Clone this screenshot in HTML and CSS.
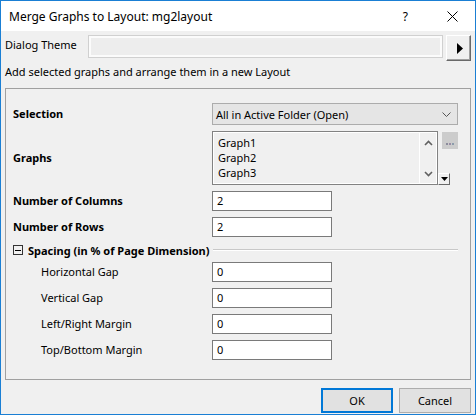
FILE: index.html
```html
<!DOCTYPE html>
<html>
<head>
<meta charset="utf-8">
<link rel="stylesheet" href="styles.css">
</head>
<body>
<div class="window">
  <div class="titlebar">
    <span class="title">Merge Graphs to Layout: mg2layout</span>
    <span class="help">?</span>
    <svg class="close" width="11" height="11" viewBox="0 0 11 11"><path d="M0.5 0.5 L10.5 10.5 M10.5 0.5 L0.5 10.5" stroke="#000" stroke-width="1" fill="none"/></svg>
  </div>
  <div class="content">
    <div class="theme-row">
      <span class="theme-label">Dialog Theme</span>
      <div class="theme-field"></div>
      <div class="arrow-btn"><svg width="6" height="11" viewBox="0 0 6 11"><path d="M0 0 L6 5.5 L0 11 Z" fill="#000"/></svg></div>
    </div>
    <div class="desc">Add selected graphs and arrange them in a new Layout</div>
    <div class="group">
      <div class="grid">
        <span class="lbl bold">Selection</span>
        <div class="combo">
          <span>All in Active Folder (Open)</span>
          <svg class="chev" width="9" height="5" viewBox="0 0 9 5"><path d="M0.5 0.5 L4.5 4.5 L8.5 0.5" stroke="#555" stroke-width="1" fill="none"/></svg>
        </div>

        <span class="lbl bold">Graphs</span>
        <div class="list-cell">
          <div class="listbox">
            <div class="items">
              <div>Graph1</div>
              <div>Graph2</div>
              <div>Graph3</div>
            </div>
            <div class="scroll">
              <svg width="9" height="6" viewBox="0 0 9 6"><path d="M1 5 L4.5 1.5 L8 5" stroke="#606060" stroke-width="1.6" fill="none"/></svg>
              <svg width="9" height="6" viewBox="0 0 9 6"><path d="M1 1 L4.5 4.5 L8 1" stroke="#606060" stroke-width="1.6" fill="none"/></svg>
            </div>
          </div>
          <div class="side">
            <div class="dots"><i class="d1"></i><i class="d2"></i><i class="d3"></i></div>
            <div class="dd"><svg width="7" height="4" viewBox="0 0 7 4"><path d="M0 0 L7 0 L3.5 4 Z" fill="#000"/></svg></div>
          </div>
        </div>

        <span class="lbl bold">Number of Columns</span>
        <div class="field">2</div>

        <span class="lbl bold">Number of Rows</span>
        <div class="field">2</div>

        <div class="section">
          <span class="toggle"><i></i></span>
          <span class="bold sec-title">Spacing (in % of Page Dimension)</span>
          <span class="rule"></span>
        </div>

        <span class="lbl sub">Horizontal Gap</span>
        <div class="field">0</div>

        <span class="lbl sub">Vertical Gap</span>
        <div class="field">0</div>

        <span class="lbl sub">Left/Right Margin</span>
        <div class="field">0</div>

        <span class="lbl sub">Top/Bottom Margin</span>
        <div class="field">0</div>
      </div>
    </div>
    <div class="buttons">
      <div class="btn ok">OK</div>
      <div class="btn">Cancel</div>
    </div>
  </div>
</div>
</body>
</html>
```

FILE: styles.css
```css
html, body {
  margin: 0;
  padding: 0;
  background: #f0f0f0;
}
body {
  font-family: "Noto Sans", "Open Sans", sans-serif;
  font-size: 11px;
  color: #000;
}
.window {
  width: 476px;
  height: 415px;
  box-sizing: border-box;
  border: 1px solid #1a7fd4;
  background: #f0f0f0;
  display: flex;
  flex-direction: column;
}
.titlebar {
  height: 30px;
  flex: none;
  background: #fff;
  display: flex;
  align-items: center;
  padding-left: 8px;
}
.title {
  font-size: 12px;
  line-height: 16px;
  margin-top: 1px;
}
.help {
  margin-left: auto;
  font-size: 12px;
  line-height: 16px;
  margin-top: 1px;
}
.close {
  margin-left: 39px;
  margin-right: 17px;
  margin-top: 1px;
}
.content {
  flex: 1;
  display: flex;
  flex-direction: column;
  padding: 4px 4px 0 4px;
}
.theme-row {
  display: flex;
  align-items: flex-start;
  height: 26px;
}
.theme-label {
  width: 83px;
  line-height: 17px;
  margin-top: 1px;
}
.theme-field {
  width: 355px;
  height: 23px;
  box-sizing: border-box;
  border: 1px solid #d0d0d0;
  box-shadow: inset 0 0 0 2px #fbfbfb;
  background: #ededed;
}
.arrow-btn {
  margin-left: 3px;
  width: 25px;
  height: 26px;
  box-sizing: border-box;
  border-style: solid;
  border-width: 1px;
  border-color: #fff #696969 #696969 #fff;
  box-shadow: inset -1px -1px 0 #a0a0a0;
  background: #f0f0f0;
  display: flex;
  align-items: center;
  justify-content: center;
}
.arrow-btn svg {
  margin-left: 2px;
}
.desc {
  margin-top: 3px;
  line-height: 16px;
  height: 16px;
}
.group {
  margin-top: 8px;
  width: 466px;
  height: 292px;
  box-sizing: border-box;
  border: 1px solid #a0a0a0;
  padding: 14px 11px 0 7px;
}
.grid {
  display: grid;
  grid-template-columns: 199px 246px;
  row-gap: 6px;
  align-items: center;
}
.lbl {
  line-height: 16px;
}
.bold {
  font-weight: bold;
}
.sub {
  padding-left: 28px;
}
.combo {
  height: 22px;
  box-sizing: border-box;
  border: 1px solid #acacac;
  background: #e5e5e5;
  display: flex;
  align-items: center;
  padding-left: 3px;
  padding-right: 6px;
}
.combo span {
  flex: 1;
}
.list-cell {
  display: flex;
  height: 54px;
}
.listbox {
  width: 230px;
  height: 54px;
  box-sizing: border-box;
  border: 1px solid #828282;
  box-shadow: inset 1px 1px 0 #fff, inset -1px -1px 0 #fff;
  background: #f0f0f0;
  display: flex;
}
.items {
  flex: 1;
  padding: 3px 0 0 5px;
  line-height: 15px;
}
.scroll {
  width: 17px;
  border-left: 1px solid #fff;
  display: flex;
  flex-direction: column;
  justify-content: space-between;
  align-items: center;
  padding: 8px 0 7px 0;
}
.side {
  display: flex;
  flex-direction: column;
  justify-content: space-between;
  align-items: flex-start;
}
.dots {
  margin-left: 4px;
  margin-top: 1px;
  width: 16px;
  height: 17px;
  box-sizing: border-box;
  background: #cccccc;
  display: flex;
  align-items: flex-end;
  justify-content: center;
  gap: 1px;
  padding-bottom: 4px;
}
.dots i {
  display: block;
  width: 2px;
  height: 2px;
}
.dots .d1 { background: #8c8c9c; }
.dots .d2 { background: #9a8ca6; }
.dots .d3 { background: #8c9cac; }
.dd {
  width: 12px;
  height: 12px;
  box-sizing: border-box;
  border-style: solid;
  border-width: 1px;
  border-color: #fff #696969 #696969 #fff;
  background: #f0f0f0;
  display: flex;
  align-items: center;
  justify-content: center;
}
.field {
  width: 120px;
  height: 20px;
  box-sizing: border-box;
  border: 1px solid #7a7a7a;
  background: #fff;
  padding-left: 4px;
  line-height: 18px;
}
.section {
  grid-column: 1 / -1;
  display: flex;
  align-items: center;
  height: 13px;
}
.toggle {
  width: 10px;
  height: 10px;
  box-sizing: border-box;
  border: 1px solid #333;
  display: flex;
  align-items: center;
  justify-content: center;
  margin-top: 1px;
}
.toggle i {
  display: block;
  width: 6px;
  height: 1px;
  background: #000;
}
.sec-title {
  margin-left: 5px;
  line-height: 16px;
  margin-top: 3px;
}
.rule {
  flex: 1;
  margin-left: 4px;
  border-top: 1px solid #c8c8c8;
  border-bottom: 1px solid #fff;
  height: 0;
}
.buttons {
  margin-top: 8px;
  display: flex;
  justify-content: flex-end;
  gap: 6px;
}
.btn {
  width: 72px;
  height: 25px;
  box-sizing: border-box;
  border: 1px solid #adadad;
  background: #e1e1e1;
  display: flex;
  align-items: center;
  justify-content: center;
}
.btn.ok {
  border: 2px solid #0078d7;
}
```
